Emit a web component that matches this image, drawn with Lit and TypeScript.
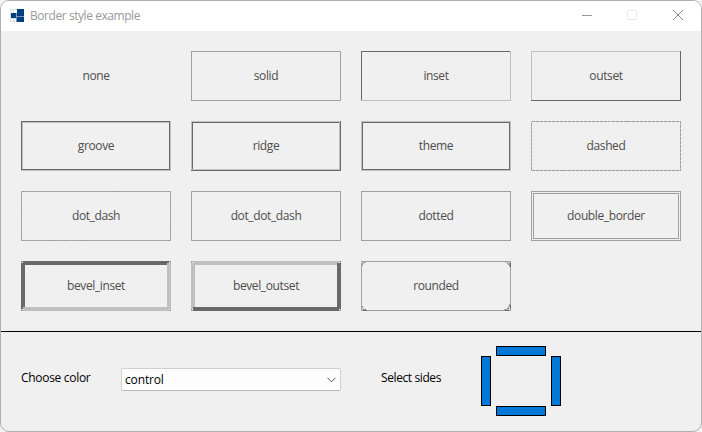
import { LitElement, html, svg, css } from "lit";
import { customElement, property } from "lit/decorators.js";

const DARK = "#696969";
const LIGHT = "#c0c0c0";
const MID = "#a0a0a0";

const rect = (x: number, y: number, w: number, h: number, fill: string) =>
  svg`<rect x=${x} y=${y} width=${w} height=${h} fill=${fill}></rect>`;

// One-pixel frame inset by `d`, with separate colours for top/left and bottom/right.
const frame = (d: number, tl: string, br: string) => svg`
  ${rect(d, d, 150 - 2 * d, 1, tl)}${rect(d, d, 1, 50 - 2 * d, tl)}
  ${rect(149 - d, d, 1, 50 - 2 * d, br)}${rect(d, 49 - d, 150 - 2 * d, 1, br)}`;

const dashed = (pattern: string, gap: string) => svg`
  <rect x="0.5" y="0.5" width="149" height="49" fill="none" stroke=${gap}></rect>
  <rect x="0.5" y="0.5" width="149" height="49" fill="none" stroke=${MID} stroke-dasharray=${pattern}></rect>`;

const bevel = (tl: string, br: string) => svg`
  ${rect(0, 0, 150, 4, tl)}${rect(0, 0, 4, 50, tl)}
  ${rect(146, 2, 4, 48, br)}${rect(2, 46, 148, 4, br)}
  ${rect(0, 0, 2, 1, MID)}${rect(0, 0, 1, 2, MID)}${rect(1, 1, 1, 1, "#fff")}
  ${rect(148, 0, 2, 1, MID)}${rect(149, 0, 1, 2, MID)}${rect(148, 1, 1, 1, "#fff")}
  ${rect(0, 48, 1, 2, MID)}${rect(0, 49, 2, 1, MID)}${rect(1, 48, 1, 1, "#fff")}
  ${rect(149, 48, 1, 2, MID)}${rect(148, 49, 2, 1, MID)}${rect(148, 48, 1, 1, "#fff")}`;

const rounded = () => svg`
  ${frame(0, MID, MID)}
  ${rect(1, 1, 1, 3, LIGHT)}${rect(2, 1, 2, 1, LIGHT)}${rect(0, 1, 1, 1, "#d8d8d8")}
  ${rect(2, 2, 1, 1, MID)}${rect(3, 1, 2, 1, MID)}${rect(1, 3, 1, 2, MID)}
  ${rect(144, 1, 3, 1, LIGHT)}${rect(146, 2, 2, 1, MID)}${rect(147, 3, 2, 1, "#808080")}${rect(148, 2, 1, 4, MID)}${rect(149, 2, 1, 4, DARK)}${rect(148, 1, 1, 1, LIGHT)}
  ${rect(1, 45, 1, 2, MID)}${rect(2, 47, 1, 1, MID)}${rect(3, 48, 2, 1, "#808080")}${rect(1, 48, 2, 1, LIGHT)}${rect(2, 49, 4, 1, DARK)}
  ${rect(148, 43, 1, 3, MID)}${rect(147, 45, 1, 2, MID)}${rect(146, 47, 2, 1, "#808080")}${rect(143, 48, 3, 1, MID)}${rect(146, 48, 2, 1, LIGHT)}${rect(149, 44, 1, 4, DARK)}${rect(144, 49, 4, 1, DARK)}`;

const STYLES: [string, unknown][] = [
  ["none", ""],
  ["solid", frame(0, MID, MID)],
  ["inset", frame(0, DARK, LIGHT)],
  ["outset", frame(0, LIGHT, DARK)],
  ["groove", svg`${frame(0, DARK, LIGHT)}${frame(1, LIGHT, DARK)}`],
  ["ridge", svg`${frame(0, LIGHT, DARK)}${frame(1, DARK, LIGHT)}`],
  ["theme", svg`${frame(0, LIGHT, LIGHT)}${frame(1, DARK, DARK)}`],
  ["dashed", dashed("3 1", "#cacaca")],
  ["dot_dash", dashed("3 1 1 1", "#b0b0b0")],
  ["dot_dot_dash", dashed("3 1 1 1 1 1", "#a6a6a6")],
  ["dotted", dashed("1 1", "#a3a3a3")],
  ["double_border", svg`${frame(0, MID, MID)}${frame(2, MID, MID)}`],
  ["bevel_inset", bevel(DARK, LIGHT)],
  ["bevel_outset", bevel(LIGHT, DARK)],
  ["rounded", rounded()],
];

@customElement("border-sample")
class BorderSample extends LitElement {
  @property() label = "";
  @property({ attribute: false }) edges: unknown = "";
  static styles = css`
    :host { display: grid; width: 150px; height: 50px; place-items: center; color: #4d4d4d; letter-spacing: -0.38px; }
    svg, span { grid-area: 1 / 1; }
    svg { display: block; }
    span { line-height: 16px; white-space: nowrap; }
  `;
  render() {
    return html`<svg width="150" height="50" shape-rendering="crispEdges">${this.edges}</svg><span>${this.label}</span>`;
  }
}

@customElement("app-root")
class AppRoot extends LitElement {
  static styles = css`
    :host { display: block; width: 702px; height: 432px; background: #f3f3f3;
      font: 12px "Open Sans", "Noto Sans", sans-serif; letter-spacing: -0.3px; }
    .window { box-sizing: border-box; height: 432px; border: 1px solid #b0b0b0; border-radius: 9px;
      background: #f0f0f0; overflow: hidden; display: flex; flex-direction: column; }
    .title { height: 30px; flex: none; background: #fff; display: flex; align-items: center; color: #999; }
    .logo { margin: 0 6px 0 9px; }
    .name { flex: 1; line-height: 16px; letter-spacing: -0.44px; }
    .controls { display: block; }
    .grid { flex: none; height: 280px; box-sizing: content-box; display: grid; padding: 20px 20px 0;
      grid-template-columns: repeat(4, 150px); grid-auto-rows: 50px; gap: 20px; }
    .bottom { flex: 1; border-top: 1px solid #000; display: flex; align-items: flex-start; padding: 14px 20px 0; color: #000; }
    .label { margin-top: 24px; line-height: 16px; }
    .color { width: 100px; }
    .sides { width: 100px; letter-spacing: -0.4px; }
    .combo { box-sizing: border-box; width: 220px; height: 23px; margin: 22px 40px 0 0; border: 1px solid #d0d0d0;
      border-bottom-color: #b8b8b8; border-radius: 2px; background: #fdfdfd; display: flex;
      align-items: center; justify-content: space-between; padding: 0 4px 0 3px; line-height: 16px; letter-spacing: -0.15px; }
    .picker { display: grid; grid-template: 10px 50px 10px / 10px 5px 50px 5px 10px; }
    .side { border: 1px solid #000; background: #0078d7; }
    .top { grid-area: 1 / 3; }
    .left { grid-area: 2 / 1; }
    .right { grid-area: 2 / 5; }
    .base { grid-area: 3 / 3; }
  `;
  render() {
    return html`
      <div class="window">
        <div class="title">
          <svg class="logo" width="14" height="14" shape-rendering="crispEdges">
            <rect x="0.5" y="0.5" width="13" height="12" fill="#fff" stroke="#dedede"></rect>
            <path d="M3.5 0V13M0 9.5H7" stroke="#dedede"></path>
            <path d="M7 0h7v7H7zM1 4h5v5H1zM7 8h7v5H7z" fill="#003f80"></path>
            <path d="M6.5 4V13M6 7.5H14" stroke="#7795b6"></path>
          </svg>
          <span class="name">Border style example</span>
          <svg class="controls" width="119" height="30" fill="none" stroke="#999">
            <path d="M0 14.5h10"></path>
            <rect x="45.5" y="9.5" width="9" height="9" rx="0.5" stroke="#e8e8e8"></rect>
            <path d="M91 9l10 10M101 9L91 19" stroke="#888"></path>
          </svg>
        </div>
        <div class="grid">
          ${STYLES.map(([name, edges]) => html`<border-sample .label=${name} .edges=${edges}></border-sample>`)}
        </div>
        <div class="bottom">
          <div class="label color">Choose color</div>
          <div class="combo"><span>control</span>
            <svg width="9" height="6" fill="none" stroke="#555"><path d="M0.5 0.8l4 4 4-4"></path></svg>
          </div>
          <div class="label sides">Select sides</div>
          <div class="picker">
            <i class="side top"></i><i class="side left"></i><i class="side right"></i><i class="side base"></i>
          </div>
        </div>
      </div>`;
  }
}
